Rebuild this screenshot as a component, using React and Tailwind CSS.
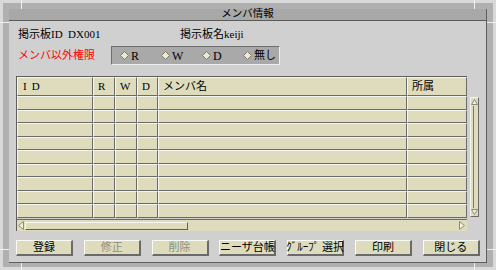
import React from 'react';

const font = { fontFamily: '"Liberation Serif", "Noto Sans CJK JP", serif' };

const cols = [
    { key: 'id', label: 'ID', w: 'w-[76px]' },
    { key: 'r', label: 'R', w: 'w-[22px]' },
    { key: 'w', label: 'W', w: 'w-[22px]' },
    { key: 'd', label: 'D', w: 'w-[21px]' },
    { key: 'name', label: 'メンバ名', w: 'w-[249px]' },
    { key: 'org', label: '所属', w: 'w-[60px]' },
];

const rows = [0, 1, 2, 3, 4, 5, 6, 7, 8];

const buttons = [
    { label: '登録' },
    { label: '修正', disabled: true },
    { label: '削除', disabled: true },
    { label: 'ニーザ台帳' },
    { label: 'ｸﾞﾙｰﾌﾟ 選択' },
    { label: '印刷' },
    { label: '閉じる' },
];

const Diamond = () => (
    <svg width="9" height="9" viewBox="0 0 9 9" className="shrink-0">
        <polygon points="4.5,0.5 8.5,4.5 4.5,8.5 0.5,4.5" fill="#ecead2" stroke="#7a7a6a" strokeWidth="1"/>
    </svg>
);

const Radio = ({ label }) => (
    <div className="flex items-center gap-[2px] w-[41px] whitespace-nowrap">
        <Diamond/>
        <span className="text-[12px] leading-none text-black font-normal">{label}</span>
    </div>
);

const App = () => {
    return (
        <div className="relative w-[496px] h-[270px] bg-[#d9d9d9] p-[3px] overflow-hidden" style={font}>
            {/* frame */}
            <div className="w-full h-full bg-[#b0b0b0] pt-[6px] pl-[6px] pr-[6px] pb-[4px]">
                <div className="w-[478px] h-[254px] bg-[#d0d0d0] border-r border-b border-[#5e5e5e] flex flex-col">
                    {/* title */}
                    <div className="h-[12px] bg-[#a8a8a8] border-b border-[#5a5a5a] flex items-center justify-center">
                        <span className="text-[10.5px] leading-none text-black">メンバ情報</span>
                    </div>

                    {/* board info */}
                    <div className="mt-[7px] h-[13px] pl-[9px] flex items-center text-[11px] leading-none text-black whitespace-nowrap">
                        <span className="w-[162px]">掲示板ID&nbsp;&nbsp;DX001</span>
                        <span>掲示板名keiji</span>
                    </div>

                    {/* permissions */}
                    <div className="mt-[5px] h-[19px] pl-[9px] flex items-center">
                        <span className="w-[93px] text-[11px] leading-none text-[#ff0000] whitespace-nowrap">メンバ以外権限</span>
                        <div className="w-[169px] h-[19px] bg-[#a9a9a9] border-t border-l border-[#6e6e6e] border-r-[#f0f0f0] border-b-[#f0f0f0] border-r border-b flex items-center pl-[8px]">
                            <Radio label="R"/>
                            <Radio label="W"/>
                            <Radio label="D"/>
                            <div className="flex items-center gap-[2px] whitespace-nowrap">
                                <Diamond/>
                                <span className="text-[11px] leading-none text-black">無し</span>
                            </div>
                        </div>
                    </div>

                    {/* table */}
                    <div className="mt-[11px] ml-[7px] h-[155px] flex">
                        <div className="w-[451px] flex flex-col border-l border-t border-[#5e5e5e]">
                            <div className="flex h-[19px]">
                                {cols.map((c) => (
                                    <div key={c.key}
                                         className={`${c.w} h-full bg-[#dedcbc] border-t border-l border-t-[#f6f6f0] border-l-[#f6f6f0] border-r border-b border-r-[#6a6a6a] border-b-[#6a6a6a] flex items-center pl-[4px] text-[11px] leading-none text-black whitespace-nowrap`}>
                                        {c.key === 'id'
                                            ? <span className="tracking-[5px] pl-[1px]">ID</span>
                                            : c.label}
                                    </div>
                                ))}
                            </div>
                            {rows.map((r) => (
                                <div key={r} className={`flex ${r % 2 === 0 ? 'h-[14px]' : 'h-[13px]'}`}>
                                    {cols.map((c) => (
                                        <div key={c.key}
                                             className={`${c.w} h-full bg-[#dedcbc] border-t border-l border-t-[#f6f6f0] border-l-[#f6f6f0] border-r border-b border-r-[#6a6a6a] border-b-[#6a6a6a]`}/>
                                    ))}
                                </div>
                            ))}
                            {/* horizontal scrollbar */}
                            <div className="mt-[1px] h-[12px] border-t border-[#6a6a6a] bg-[#dedcbc] flex items-center pl-[1px] pr-[2px]">
                                <svg width="6" height="9" viewBox="0 0 6 9" className="shrink-0">
                                    <polygon points="5.5,0.5 5.5,8.5 0.5,4.5" fill="#f4f2dc" stroke="#8a8a7a" strokeWidth="1"/>
                                </svg>
                                <div className="ml-[1px] w-[163px] h-[8px] bg-[#dedcbc] border-t border-l border-[#f6f6f0] border-r border-b border-r-[#5e5e5e] border-b-[#5e5e5e]"/>
                                <div className="flex-1"/>
                                <svg width="6" height="9" viewBox="0 0 6 9" className="shrink-0">
                                    <polygon points="0.5,0.5 0.5,8.5 5.5,4.5" fill="#f4f2dc" stroke="#8a8a7a" strokeWidth="1"/>
                                </svg>
                            </div>
                        </div>
                        {/* vertical scrollbar */}
                        <div className="w-[13px] pl-[3px] pt-[21px]">
                            <div className="w-[9px] h-[120px] bg-[#dedcbc] border-t border-l border-[#f6f6f0] border-r border-b border-r-[#6a6a6a] border-b-[#6a6a6a] flex flex-col items-center justify-between py-[1px]">
                                <svg width="7" height="6" viewBox="0 0 7 6">
                                    <polygon points="3.5,0.5 6.5,5.5 0.5,5.5" fill="#f4f2dc" stroke="#8a8a7a" strokeWidth="1"/>
                                </svg>
                                <div className="flex-1 w-[4px] ml-[1px] border-l border-[#7a7a6a] my-[1px]"/>
                                <svg width="7" height="6" viewBox="0 0 7 6">
                                    <polygon points="0.5,0.5 6.5,0.5 3.5,5.5" fill="#f4f2dc" stroke="#8a8a7a" strokeWidth="1"/>
                                </svg>
                            </div>
                        </div>
                    </div>

                    {/* buttons */}
                    <div className="mt-[9px] ml-[7px] h-[16px] flex gap-[10.8px]">
                        {buttons.map((b) => (
                            <button key={b.label}
                                    className={`w-[57px] h-[16px] bg-[#dedcbc] border-t border-l border-[#fafaf4] border-r-2 border-b-2 border-r-[#6a6a6a] border-b-[#6a6a6a] flex items-center justify-center text-[11px] leading-none whitespace-nowrap ${b.disabled ? 'text-[#8e8e86]' : 'text-black'}`}>
                                {b.label}
                            </button>
                        ))}
                    </div>
                </div>
            </div>

            {/* frame resize ticks */}
            <div className="absolute left-[21px] top-0 w-[1px] h-[9px] bg-[#f0f0f0]"/>
            <div className="absolute left-[474px] top-0 w-[1px] h-[9px] bg-[#f0f0f0]"/>
            <div className="absolute left-[21px] bottom-0 w-[1px] h-[7px] bg-[#f0f0f0]"/>
            <div className="absolute left-[474px] bottom-0 w-[1px] h-[7px] bg-[#f0f0f0]"/>
            <div className="absolute left-0 top-[22px] w-[9px] h-[1px] bg-[#f0f0f0]"/>
            <div className="absolute right-0 top-[22px] w-[9px] h-[1px] bg-[#f0f0f0]"/>
            <div className="absolute left-0 top-[249px] w-[9px] h-[1px] bg-[#f0f0f0]"/>
            <div className="absolute right-0 top-[249px] w-[9px] h-[1px] bg-[#f0f0f0]"/>
        </div>
    );
};

export default App;
